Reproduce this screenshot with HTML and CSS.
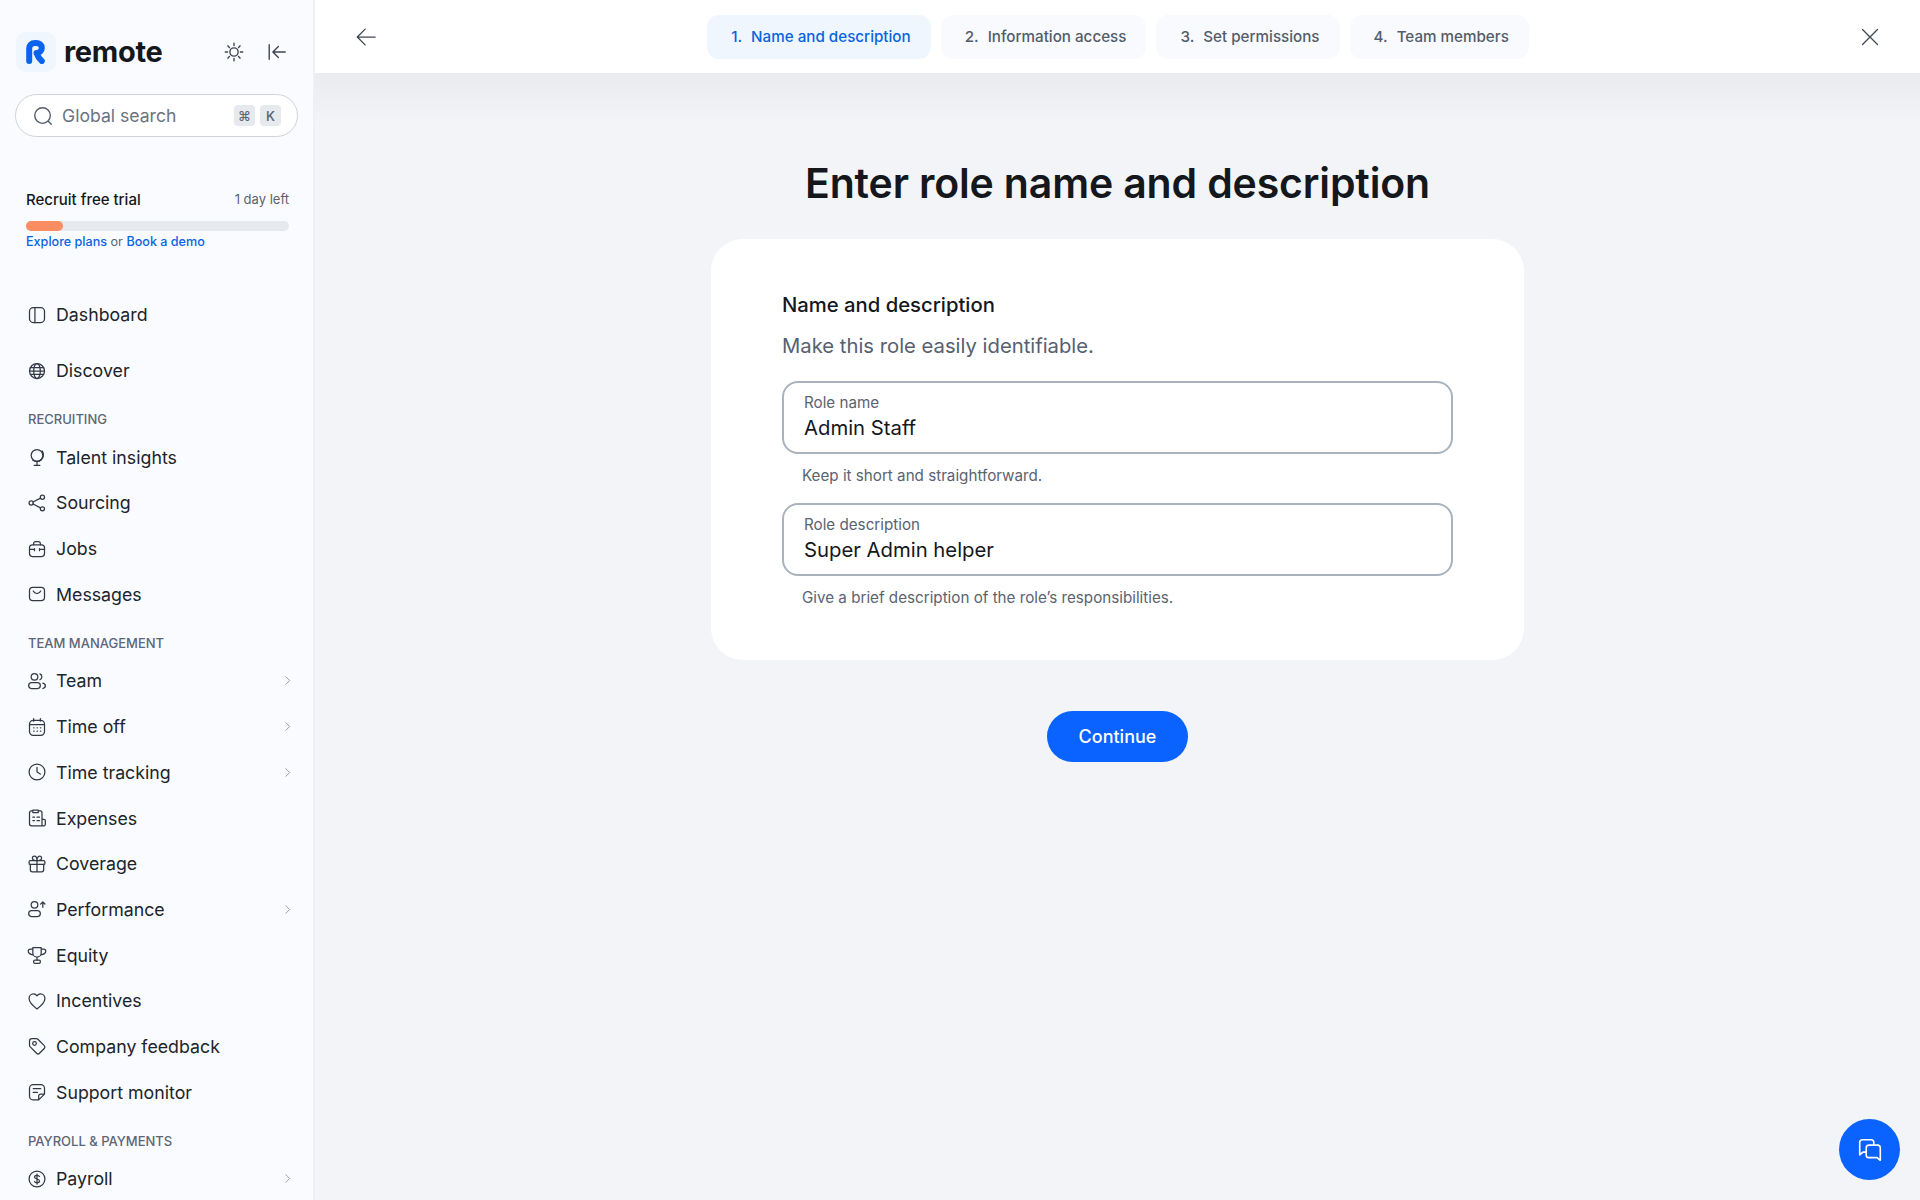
FILE: index.html
```html
<!DOCTYPE html>
<html lang="en">

<head>
  <meta charset="UTF-8" />
  <title>Enter role name and description</title>
  <link rel="stylesheet" href="styles.css">
</head>

<body>
  <div class="app">
    <aside class="sidebar">
      <div class="brand-row">
        <div class="logo-tile">
          <svg class="logo-mark" width="19" height="24" viewBox="0 0 19 24"><path d="M3.200 21V8.500C3.200 5 5.500 3 9 3h1c3.500 0 5.800 2 5.800 5 0 3-2.300 5-5.300 5 1 3 3 6 5.300 8"/></svg>
        </div>
        <span class="wordmark">remote</span>
        <svg class="brand-icon sun" width="22" height="22" viewBox="0 0 24 24"><circle cx="12" cy="12" r="4.500"/><path d="M12 2.500v2.500M12 19v2.500M2.500 12H5M19 12h2.500M5.300 5.300 7 7M17 17l1.700 1.700M5.300 18.700 7 17M17 7l1.700-1.700"/></svg>
        <svg class="brand-icon" width="22" height="22" viewBox="0 0 24 24"><path d="M3.500 4v16M21 12H8M13.500 6 7.500 12l6 6"/></svg>
      </div>

      <div class="search">
        <svg width="22" height="22" viewBox="0 0 24 24"><circle cx="11.500" cy="11.500" r="8.500"/><path d="m18 18 3 3"/></svg>
        <span class="search-text">Global search</span>
        <span class="key">⌘</span>
        <span class="key">K</span>
      </div>

      <div class="trial">
        <div class="trial-head">
          <span class="trial-title">Recruit free trial</span>
          <span class="trial-left">1 day left</span>
        </div>
        <div class="progress"><div class="progress-fill"></div></div>
        <div class="trial-links"><a>Explore plans</a> or <a>Book a demo</a></div>
      </div>

      <nav class="nav">
        <div class="nav-item first">
          <svg viewBox="0 0 24 24"><rect x="3" y="3" width="18" height="18" rx="4.500"/><path d="M9.500 3v18"/></svg>
          <span>Dashboard</span>
        </div>
        <div class="nav-item">
          <svg viewBox="0 0 24 24"><circle cx="12" cy="12" r="9"/><path d="M3 12h18M4 8h16M4 16h16"/><ellipse cx="12" cy="12" rx="4" ry="9"/></svg>
          <span>Discover</span>
        </div>

        <div class="nav-label">Recruiting</div>
        <div class="nav-item">
          <svg viewBox="0 0 24 24"><circle cx="12" cy="10" r="7"/><path d="M18.500 5c2 3.500 1.500 8-1.500 10.500s-7 2.500-10 .5M12 18.500V22M8.500 22h7"/></svg>
          <span>Talent insights</span>
        </div>
        <div class="nav-item">
          <svg viewBox="0 0 24 24"><circle cx="5" cy="12" r="2.500"/><circle cx="18.500" cy="5" r="2.500"/><circle cx="18.500" cy="19" r="2.500"/><path d="m7.200 10.800 9-4.600M7.200 13.200l9 4.600"/></svg>
          <span>Sourcing</span>
        </div>
        <div class="nav-item">
          <svg viewBox="0 0 24 24"><rect x="3" y="7" width="18" height="14" rx="3.500"/><path d="M8 7V5.500C8 4 9 3 10.500 3h3C15 3 16 4 16 5.500V7M3 12.500h6M15 12.500h6M9 11.500v2.500M15 11.500v2.500"/></svg>
          <span>Jobs</span>
        </div>
        <div class="nav-item">
          <svg viewBox="0 0 24 24"><rect x="3" y="4" width="18" height="16" rx="4"/><path d="M7.500 8.500c1 2 2.500 3 4.500 3s3.500-1 4.500-3"/></svg>
          <span>Messages</span>
        </div>

        <div class="nav-label">Team management</div>
        <div class="nav-item">
          <svg viewBox="0 0 24 24"><circle cx="9" cy="7" r="4"/><rect x="2" y="14" width="14" height="7" rx="3.500"/><path d="M15.500 3.500a3.800 3.800 0 0 1 0 7M19 14.500c2 .5 3 1.800 3 3.200s-1 2.800-3 3.300"/></svg>
          <span>Team</span>
          <svg class="chevron" viewBox="0 0 24 24"><path d="m9 5 7 7-7 7"/></svg>
        </div>
        <div class="nav-item">
          <svg viewBox="0 0 24 24"><rect x="3" y="4" width="18" height="18" rx="4.500"/><path d="M8 2v3M16 2v3M3.500 9h17M8 13h.500M12 13h.500M16 13h.500M8 17h.500M12 17h.500M16 17h.500"/></svg>
          <span>Time off</span>
          <svg class="chevron" viewBox="0 0 24 24"><path d="m9 5 7 7-7 7"/></svg>
        </div>
        <div class="nav-item">
          <svg viewBox="0 0 24 24"><circle cx="12" cy="12" r="9.500"/><path d="M12 6.500V12l4 2.500"/></svg>
          <span>Time tracking</span>
          <svg class="chevron" viewBox="0 0 24 24"><path d="m9 5 7 7-7 7"/></svg>
        </div>
        <div class="nav-item">
          <svg viewBox="0 0 24 24"><path d="M6.500 3.500H5.500C4 3.500 3 4.500 3 6v13c0 1.500 1 2.500 2.500 2.500H20c1.200 0 2-.8 2-2v-4.500c0-.8-.5-1.300-1.500-1.300H18M14 3.500h2c1.200 0 2 1 2 2.500v15.500M7 2.500h6.500v3H7zM7 11h2M12 11h3M7 15h2M12 15h3"/></svg>
          <span>Expenses</span>
        </div>
        <div class="nav-item">
          <svg viewBox="0 0 24 24"><rect x="2.500" y="8" width="19" height="4.500" rx="1.500"/><path d="M4 12.500V19c0 1.500 1 2.500 2.500 2.500h11c1.500 0 2.500-1 2.500-2.500v-6.500M12 8v13.500M12 8C9 8 6.500 6.800 6.500 4.800 6.500 3.500 7.500 2.500 8.800 2.500 11 2.500 12 5.500 12 8zM12 8c3 0 5.500-1.200 5.500-3.200 0-1.300-1-2.300-2.300-2.300C13 2.500 12 5.500 12 8z"/></svg>
          <span>Coverage</span>
        </div>
        <div class="nav-item">
          <svg viewBox="0 0 24 24"><circle cx="9" cy="7" r="4"/><rect x="2" y="14" width="14" height="7" rx="3.500"/><path d="M19 10V4M16.500 6 19 3.500 21.500 6"/></svg>
          <span>Performance</span>
          <svg class="chevron" viewBox="0 0 24 24"><path d="m9 5 7 7-7 7"/></svg>
        </div>
        <div class="nav-item">
          <svg viewBox="0 0 24 24"><path d="M7 3h10v6.500a5 5 0 0 1-10 0zM7 5H4c-1.500 0-2.500 1-2.500 2.500S3 11 7.500 12M17 5h3c1.500 0 2.500 1 2.500 2.500S21 11 16.500 12M12 14.500V18"/><rect x="8" y="18" width="8" height="4" rx="1.500"/></svg>
          <span>Equity</span>
        </div>
        <div class="nav-item">
          <svg viewBox="0 0 24 24"><path d="M12 21.500C6 17 2.500 13.500 2.500 9c0-3 2.300-5.500 5.300-5.500 1.800 0 3.300.9 4.200 2.300.9-1.400 2.400-2.300 4.200-2.300 3 0 5.300 2.500 5.300 5.500 0 4.500-3.500 8-9.500 12.500z"/></svg>
          <span>Incentives</span>
        </div>
        <div class="nav-item">
          <svg viewBox="0 0 24 24"><path d="M3 6c0-1.700 1.300-3 3-3h5c.8 0 1.500.3 2.100.9l7.600 7.600c1 1 1 2.500 0 3.500l-5.700 5.700c-1 1-2.500 1-3.500 0L3.900 13.100C3.300 12.500 3 11.800 3 11z"/><circle cx="9" cy="9" r="2.200"/></svg>
          <span>Company feedback</span>
        </div>
        <div class="nav-item">
          <svg viewBox="0 0 24 24"><path d="M14 21.500H7.500C5 21.500 3 19.500 3 17V7.500C3 5 5 3 7.500 3h9C19 3 21 5 21 7.500V14.500zM14 21.500V17c0-1.500 1-2.500 2.500-2.500H21M7.500 8h9M7.500 12.500h5"/></svg>
          <span>Support monitor</span>
        </div>

        <div class="nav-label">Payroll &amp; payments</div>
        <div class="nav-item">
          <svg viewBox="0 0 24 24"><circle cx="12" cy="12" r="9.500"/><path d="M15 9c-.5-1-1.500-1.500-3-1.500-1.800 0-3 .9-3 2.200 0 3 6 1.600 6 4.600 0 1.300-1.200 2.200-3 2.200-1.500 0-2.500-.5-3-1.500M12 6v12"/></svg>
          <span>Payroll</span>
          <svg class="chevron" viewBox="0 0 24 24"><path d="m9 5 7 7-7 7"/></svg>
        </div>
      </nav>
    </aside>

    <main class="main">
      <header class="topbar">
        <svg class="top-icon" width="20" height="20" viewBox="0 0 24 24"><path d="M23 12H2M11 2.500 1.500 12l9.500 9.500"/></svg>
        <div class="steps">
          <div class="step active"><span>1.</span>Name and description</div>
          <div class="step"><span>2.</span>Information access</div>
          <div class="step"><span>3.</span>Set permissions</div>
          <div class="step"><span>4.</span>Team members</div>
        </div>
        <svg class="top-icon" width="20" height="20" viewBox="0 0 24 24"><path d="M3 3l18 18M21 3 3 21"/></svg>
      </header>

      <div class="content">
        <h1 class="page-title">Enter role name and description</h1>

        <section class="card">
          <h2 class="card-title">Name and description</h2>
          <p class="card-sub">Make this role easily identifiable.</p>

          <div class="field">
            <label>Role name</label>
            <div class="value">Admin Staff</div>
          </div>
          <div class="hint">Keep it short and straightforward.</div>

          <div class="field second">
            <label>Role description</label>
            <div class="value">Super Admin helper</div>
          </div>
          <div class="hint">Give a brief description of the role’s responsibilities.</div>
        </section>

        <button class="continue">Continue</button>
      </div>

      <button class="chat">
        <svg width="26" height="26" viewBox="0 0 24 24"><path d="M15.500 7V5c0-1.500-1-2.500-2.500-2.500H5C3.500 2.500 2.500 3.500 2.500 5v11.500L5.500 14H8"/><path d="M11 7.500h8c1.500 0 2.500 1 2.500 2.500v11.500L18.500 19H11c-1.500 0-2.500-1-2.500-2.500V10c0-1.500 1-2.500 2.500-2.500z"/></svg>
      </button>
    </main>
  </div>
</body>

</html>
```

FILE: styles.css
```css
* {
  box-sizing: border-box;
}

body {
  margin: 0;
  font-family: Inter, "Liberation Sans", sans-serif;
  color: #14171c;
  background-color: #f2f4f8;
}

svg {
  fill: none;
  stroke: currentColor;
  stroke-width: 1.5;
  stroke-linecap: round;
  stroke-linejoin: round;
  flex-shrink: 0;
}

.app {
  display: flex;
  height: 1200px;
  overflow: hidden;
}

/* sidebar */
.sidebar {
  width: 315px;
  flex-shrink: 0;
  height: 1200px;
  overflow: hidden;
  padding-top: 32px;
  background-color: #fafbfe;
  border-right: 2px solid #eef0f5;
}

.brand-row {
  display: flex;
  align-items: center;
  height: 40px;
  padding-left: 16px;
}

.logo-tile {
  display: flex;
  align-items: center;
  justify-content: center;
  width: 40px;
  height: 40px;
  padding-right: 1px;
  border-radius: 10px;
  background-color: #f0f6fe;
}

.logo-mark {
  stroke: #0a62f0;
  stroke-width: 6;
}

.wordmark {
  margin: 0 0 2px 8px;
  font-size: 29px;
  font-weight: 700;
  letter-spacing: -0.3px;
  color: #14171c;
}

.brand-icon {
  margin-left: 21px;
  color: #3d4450;
}

.brand-icon.sun {
  margin-left: 61px;
}

.search {
  display: flex;
  align-items: center;
  width: 283px;
  height: 43px;
  margin: 22px 0 0 15px;
  padding: 0 16px 0 16px;
  background-color: #fff;
  border: 1px solid #cfd3d9;
  border-radius: 22px;
  color: #545d6a;
}

.search-text {
  flex: 1;
  margin-left: 8px;
  font-size: 17.600px;
  color: #6b7380;
}

.key {
  display: flex;
  align-items: center;
  justify-content: center;
  height: 21px;
  min-width: 21px;
  padding: 0 3px;
  margin-left: 5px;
  border-radius: 4px;
  background-color: #e6e9ed;
  font-size: 13px;
  font-weight: 500;
  color: #59616e;
}

.trial {
  padding: 0 24px 0 26px;
  margin-top: 52px;
}

.trial-head {
  display: flex;
  align-items: center;
  justify-content: space-between;
  height: 20px;
}

.trial-title {
  font-size: 15px;
  font-weight: 500;
}

.trial-left {
  font-size: 13px;
  color: #5b6370;
}

.progress {
  height: 10px;
  margin-top: 12px;
  border-radius: 5px;
  background-color: #e6e9ed;
}

.progress-fill {
  width: 37px;
  height: 10px;
  border-radius: 5px;
  background-color: #fb8d62;
}

.trial-links {
  height: 16px;
  margin-top: 3px;
  font-size: 12.600px;
  line-height: 16px;
  color: #5b6370;
}

.trial-links a {
  font-weight: 500;
  color: #0a63e0;
}

.nav {
  margin-top: 42px;
  padding: 0 19px 0 27px;
}

.nav-item {
  display: flex;
  align-items: center;
  height: 45.7px;
  font-size: 17.750px;
  color: #20242b;
}

.nav-item.first {
  margin-bottom: 10px;
}

.nav-item svg {
  width: 20px;
  height: 20px;
  margin-right: 9px;
  color: #333944;
}

.nav-item span {
  flex: 1;
}

.nav-item .chevron {
  width: 13px;
  height: 13px;
  margin-right: 0;
  color: #7d8490;
}

.nav-label {
  height: 16px;
  margin: 18px 0 7px 1px;
  font-size: 13px;
  line-height: 16px;
  font-weight: 500;
  text-transform: uppercase;
  color: #5d6675;
}

/* main */
.main {
  flex: 1;
  position: relative;
  display: flex;
  flex-direction: column;
}

.topbar {
  display: flex;
  align-items: center;
  justify-content: space-between;
  height: 73px;
  padding: 0 40px 0 41px;
  background-color: #fff;
}

.top-icon {
  color: #3f4652;
}

.steps {
  display: flex;
  gap: 10px;
}

.step {
  display: flex;
  align-items: center;
  height: 44px;
  padding: 0 20px 0 24px;
  border-radius: 12px;
  background-color: #f8fafd;
  font-size: 15.200px;
  font-weight: 500;
  color: #545c69;
}

.step span {
  margin-right: 9px;
}

.step.active {
  background-color: #eff6fe;
  color: #0a63e0;
}

.content {
  flex: 1;
  display: flex;
  flex-direction: column;
  align-items: center;
  padding-top: 85px;
  background: linear-gradient(#e9ebef, #f2f4f8 50px) no-repeat;
}

.page-title {
  margin: 0 0 31px;
  font-size: 41px;
  line-height: 50px;
  font-weight: 600;
  letter-spacing: -0.15px;
  color: #14171c;
}

.card {
  width: 813px;
  height: 421px;
  padding: 54px 71px 0;
  background-color: #fff;
  border-radius: 32px;
}

.card-title {
  margin: 0;
  font-size: 20.250px;
  line-height: 24px;
  font-weight: 500;
  color: #14171c;
}

.card-sub {
  margin: 16px 0 22px;
  font-size: 20.250px;
  line-height: 26px;
  color: #566070;
}

.field {
  height: 73px;
  padding: 10px 20px 0;
  background-color: #fff;
  border: 2px solid #aab2bd;
  border-radius: 16px;
}

.field.second {
  margin-top: 16px;
}

.field label {
  display: block;
  font-size: 15.200px;
  line-height: 20px;
  color: #5b6370;
}

.value {
  margin-top: 2px;
  font-size: 20.300px;
  line-height: 26px;
  color: #14171c;
}

.hint {
  height: 22px;
  margin-top: 11px;
  padding-left: 20px;
  font-size: 15.200px;
  line-height: 22px;
  color: #5b6370;
}

.continue {
  width: 141px;
  height: 51px;
  margin-top: 51px;
  border: none;
  border-radius: 26px;
  background-color: #0a62ff;
  color: #fff;
  font-family: Inter, "Liberation Sans", sans-serif;
  font-size: 18px;
  font-weight: 500;
}

.chat {
  position: absolute;
  right: 20px;
  bottom: 20px;
  display: flex;
  align-items: center;
  justify-content: center;
  width: 61px;
  height: 61px;
  padding: 0;
  border: none;
  border-radius: 50%;
  background-color: #0a62ff;
  color: #fff;
}
```
